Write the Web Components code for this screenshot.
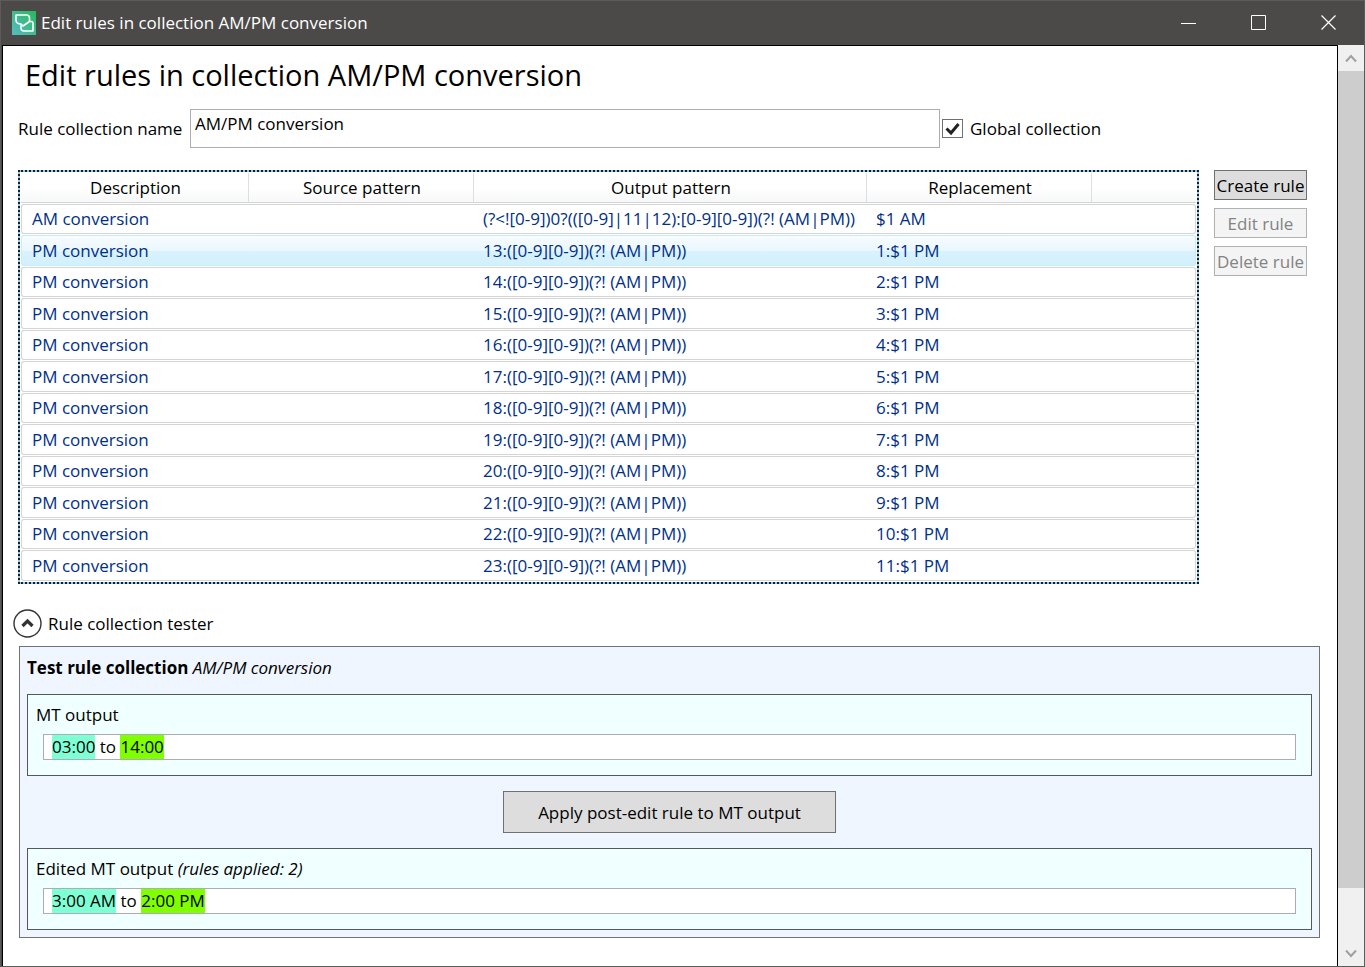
<!DOCTYPE html>
<html lang="en">
<head>
<meta charset="utf-8">
<title>Edit rules in collection AM/PM conversion</title>
<style>
html, body { margin: 0; height: 100%; }
body { overflow: hidden; background: #4b4a48; color: #000; font: 17px/24px "Open Sans", "Noto Sans", sans-serif; }
</style>
</head>
<body>
<app-window heading="Edit rules in collection AM/PM conversion">
  <page-heading>Edit rules in collection AM/PM conversion</page-heading>
  <collection-form name="AM/PM conversion"></collection-form>
  <rule-manager></rule-manager>
  <tester-section label="Rule collection tester">
    <rule-tester collection="AM/PM conversion">
      <output-box slot="source"><span slot="label">MT output</span><hit-mark>03:00</hit-mark> to <hit-mark kind="lime">14:00</hit-mark></output-box>
      <output-box slot="result"><span slot="label">Edited MT output <i>(rules applied: 2)</i></span><hit-mark>3:00 AM</hit-mark> to <hit-mark kind="lime">2:00 PM</hit-mark></output-box>
    </rule-tester>
  </tester-section>
</app-window>

<script>
const define = (name, render) => customElements.define(name, class extends HTMLElement {
  connectedCallback() {
    if (this.shadowRoot) return;
    this.attachShadow({ mode: 'open' }).innerHTML = render(this);
  }
});

define('app-window', el => `
<style>
:host { display: flex; flex-direction: column; height: 100vh; box-sizing: border-box; border: 1px solid #5c5b59; background: #4b4a48; }
header { display: flex; align-items: center; height: 44px; flex: none; padding-left: 11px; color: #fff; }
header span { flex: 1; }
.logo { display: block; margin-right: 5px; }
header button { all: unset; width: 70px; height: 44px; display: grid; place-items: center; }
.body { flex: 1; min-height: 0; display: flex; }
main { flex: 1; min-width: 0; overflow: hidden; background: #fff; border: solid #000; border-width: 1px 1px 0 1px; margin-left: 1px; padding: 11px 17px 0 15px; display: flow-root; }
</style>
<header>
  <svg class="logo" width="24" height="24" viewBox="0 0 24 24"><defs><linearGradient id="g" x1="1" y1="0" x2="0" y2="1"><stop offset="0" stop-color="#28b95c"/><stop offset="1" stop-color="#58bcc4"/></linearGradient></defs><rect width="24" height="24" fill="url(#g)"/><path d="M4 4h10.500q3 0 3 3v3.500l-6.500 4.500-2-2q-5 0-5-4z M17.500 10.500h1.500q2 0 2 2v7.500h-9q-3 0-3-3v-3.500" fill="none" stroke="#fff" stroke-width="1.6" stroke-linejoin="round"/></svg>
  <span>${el.getAttribute('heading')}</span>
  <button aria-label="Minimize"><svg width="16" height="16"><path d="M0 8.5h15" stroke="#fff"/></svg></button>
  <button aria-label="Maximize"><svg width="16" height="16"><path d="M.5.5h14v14h-14z" fill="none" stroke="#fff"/></svg></button>
  <button aria-label="Close"><svg width="16" height="16"><path d="M.5.5l14 14m0-14l-14 14" stroke="#fff" stroke-width="1.2"/></svg></button>
</header>
<div class="body"><main><slot></slot></main><scroll-rail></scroll-rail></div>`);

define('scroll-rail', () => `
<style>
:host { display: flex; flex-direction: column; width: 26px; flex: none; background: #f0f0f0; }
button { all: unset; height: 26px; display: grid; place-items: center; }
.track { flex: 1; }
.thumb { height: 94%; background: #cdcdcd; }
</style>
<button aria-label="Scroll up"><svg width="12" height="9"><path d="M1 7.5l5-5.500 5 5.500" fill="none" stroke="#a0a0a0" stroke-width="2"/></svg></button>
<div class="track"><div class="thumb"></div></div>
<button aria-label="Scroll down"><svg width="12" height="9"><path d="M1 1.500l5 5.500 5-5.500" fill="none" stroke="#a0a0a0" stroke-width="2"/></svg></button>`);

define('page-heading', () => `
<style>
:host { display: block; margin-left: 7px; }
h1 { margin: 0; font-size: 29px; line-height: 36px; font-weight: 400; }
</style><h1><slot></slot></h1>`);

define('collection-form', el => `
<style>
:host { display: flex; align-items: center; margin-top: 16px; }
.name { width: 172px; flex: none; white-space: nowrap; }
.text { flex: 1; min-width: 0; height: 39px; box-sizing: border-box; border: 1px solid #abadb3; margin: 0; padding: 0 4px 10px; font: inherit; color: #000; background: #fff; }
.global { display: flex; align-items: center; gap: 7px; flex: 0 0 378px; margin-left: 2px; }
input[type=checkbox] { appearance: none; margin: 0; width: 21px; height: 19px; border: 1px solid #707070; background: #fff url("data:image/svg+xml,%3Csvg xmlns='http://www.w3.org/2000/svg' width='19' height='17'%3E%3Cpath d='M3.500 8.500L8 13 15.500 4' fill='none' stroke='%23212121' stroke-width='3'/%3E%3C/svg%3E") center no-repeat; }
</style>
<label class="name" for="n">Rule collection name</label>
<input class="text" id="n" type="text" value="${el.getAttribute('name')}">
<label class="global"><input type="checkbox" checked><span>Global collection</span></label>`);

define('rule-manager', () => `
<style>
:host { display: flex; align-items: flex-start; gap: 15px; margin: 22px 13px 0 0; }
rule-table { flex: 1; min-width: 0; }
nav { display: flex; flex-direction: column; gap: 8px; width: 93px; flex: none; }
</style>
<rule-table></rule-table>
<nav><push-button>Create rule</push-button><push-button disabled>Edit rule</push-button><push-button disabled>Delete rule</push-button></nav>`);

define('push-button', el => `
<style>
:host { display: block; }
button { width: 100%; height: 30px; padding: 2px 0 0; border: 1px solid #707070; background: #ddd; color: #000; font: inherit; white-space: nowrap; display: flex; align-items: center; justify-content: center; }
button:disabled { border-color: #adb2b5; background: #f4f4f4; color: #838383; }
:host([large]) button { height: 42px; }
</style><button ${el.hasAttribute('disabled') ? 'disabled' : ''}><slot></slot></button>`);

const tail = ':([0-9][0-9])(?! (AM|PM))';
const rules = [['AM conversion', '(?&lt;![0-9])0?(([0-9]|11|12):[0-9][0-9])(?! (AM|PM))', '$1 AM']];
for (let h = 13; h < 24; h++) rules.push(['PM conversion', h + tail, (h - 12) + ':$1 PM']);

define('rule-table', () => `
<style>
:host { display: block; border: 2px dotted #10202c; padding: 0 1px; background: linear-gradient(#fff, #fff) padding-box, #9cc8e4 border-box; }
table { width: 100%; table-layout: fixed; border-collapse: separate; border-spacing: 0 1px; }
th { box-sizing: border-box; font-weight: 400; height: 30px; padding: 0 0 0 2px; text-align: center; border-right: 1px solid #dedfe1; border-bottom: 1px solid #d5d5d5; background: linear-gradient(#fff 50%, #f7f8f9); }
th:last-child { border-right: 0; }
td { box-sizing: border-box; height: 30px; padding: 0 0 0 9px; color: #002f8a; white-space: nowrap; border: solid #d5d5d5; border-width: 1px 0; }
tr:nth-child(even) td { height: 31px; }
td:first-child { border-left-width: 1px; border-radius: 3px 0 0 3px; padding-left: 10px; }
td:last-child { border-right-width: 1px; border-radius: 0 3px 3px 0; }
tr.on td { border-color: #c5ecfb; background: linear-gradient(#f8fcff, #e9f7fe 50%, #d9f2fe 51%, #d2f0fd); }
</style>
<table>
<colgroup><col style="width:228px"><col style="width:225px"><col style="width:393px"><col style="width:225px"><col></colgroup>
<thead><tr><th>Description</th><th>Source pattern</th><th>Output pattern</th><th>Replacement</th><th></th></tr></thead>
<tbody>${rules.map((r, i) => `<tr${i === 1 ? ' class="on"' : ''}><td>${r[0]}</td><td></td><td>${r[1]}</td><td>${r[2]}</td><td></td></tr>`).join('')}</tbody>
</table>`);

define('tester-section', el => `
<style>
:host { display: block; margin-top: 25px; }
button { all: unset; display: flex; align-items: center; gap: 6px; margin-left: -5px; }
svg { display: block; }
</style>
<button aria-expanded="true"><svg width="29" height="29"><circle cx="14.500" cy="14.500" r="13.500" fill="none" stroke="#333" stroke-width="1.400"/><path d="M9.500 17l5-5 5 5" fill="none" stroke="#333" stroke-width="3.200"/></svg><span>${el.getAttribute('label')}</span></button>
<slot></slot>`);

define('rule-tester', el => `
<style>
:host { display: block; margin: 8px 0 0 1px; padding: 9px 7px 7px; border: 1px solid #707276; background: #f0f6ff; }
p { margin: 0 0 14px; }
.go { display: flex; justify-content: center; margin: 15px 0; }
push-button { width: 333px; }
</style>
<p><b>Test rule collection</b> <i>${el.getAttribute('collection')}</i></p>
<slot name="source"></slot>
<div class="go"><push-button large>Apply post-edit rule to MT output</push-button></div>
<slot name="result"></slot>`);

define('output-box', () => `
<style>
:host { display: block; border: 1px solid #53585b; background: #f0ffff; padding: 8px 15px 15px; }
.label { margin: 0 0 7px -7px; }
.field { height: 24px; border: 1px solid #abadb3; background: #fff; padding-left: 8px; }
</style>
<div class="label"><slot name="label"></slot></div><div class="field"><slot></slot></div>`);

define('hit-mark', () => `
<style>
:host { display: inline-block; background: #7fffd4; }
:host([kind=lime]) { background: #7fff00; }
</style><slot></slot>`);
</script>
</body>
</html>
